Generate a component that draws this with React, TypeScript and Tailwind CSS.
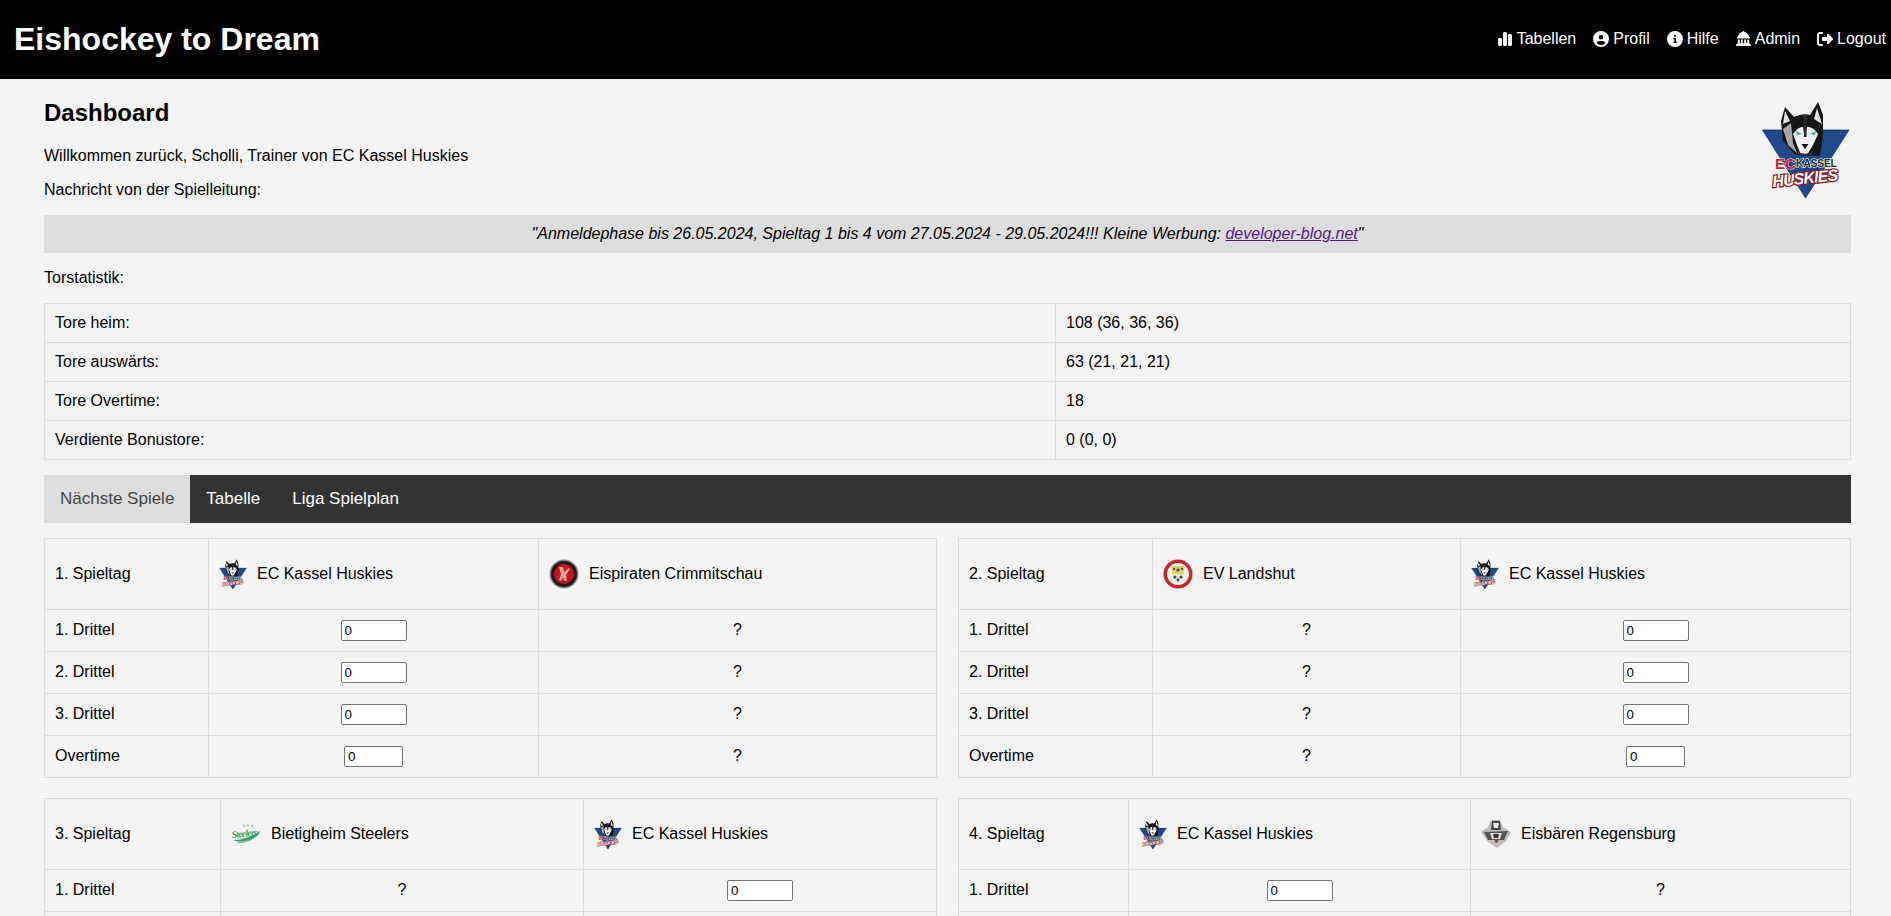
import { FaChartSimple, FaCircleInfo, FaCircleUser, FaLandmarkDome, FaRightFromBracket } from "react-icons/fa6";
import type { ReactNode } from "react";

const HuskyLogo = ({ className, viewBox = "0 0 100 100" }: { className: string; viewBox?: string }) => (
  <svg viewBox={viewBox} className={className}>
    <polygon points="7.5,31 94,31 50.5,99" fill="#1c4a8c" stroke="#123468" strokeWidth="0.8" />
    <path d="M30 8 L39 18 Q47 14 55 16 L63 3 L68 16 L68 38 L65 57 L40 56 L28 42 L26 22 Z" fill="#151515" />
    <path d="M30 12 L28 25 L35 22 Z M62 9 L67 25 L59 20 Z" fill="#e4e4e4" />
    <path d="M28 30 L36 24 L38 44 L42 54 L33 46 Z" fill="#a9a9a9" />
    <path d="M38 35 Q44 27 48 28 L50 38 L52 28 Q58 27 63 35 L58 46 L52 56 L46 56 L42 46 Z" fill="#f2f2f2" />
    <path d="M48 16 L52 16 L51.5 38 L49 38 Z" fill="#2a2a2a" />
    <path d="M41 32 L47 35 L42 36 Z M61 32 L55 35 L60 36 Z" fill="#38a3b5" />
    <path d="M46.5 45 L53.5 45 L50 50 Z" fill="#111" />
    <path d="M42 52 Q50 58 59 51 L57 56 L44 56 Z" fill="#333" />
    <text x="20" y="70" fontFamily="'Liberation Sans', sans-serif" fontWeight="700" fontSize="15" fill="#cf2530" stroke="#fff" strokeWidth="0.8" paintOrder="stroke">EC</text>
    <text x="41" y="68" fontFamily="'Liberation Sans', sans-serif" fontWeight="700" fontSize="10.5" fill="#2a2a2a" stroke="#fff" strokeWidth="1.2" paintOrder="stroke" textLength="41">KASSEL</text>
    <text x="18" y="88" fontFamily="'Liberation Sans', sans-serif" fontWeight="700" fontStyle="italic" fontSize="16" fill="#fff" stroke="#8f1c24" strokeWidth="2.6" paintOrder="stroke" textLength="66" transform="rotate(-6 18 88)">HUSKIES</text>
  </svg>
);

const CrimmitschauLogo = () => (
  <svg viewBox="0 0 30 30" className="w-[30px] h-[30px] shrink-0">
    <circle cx="15" cy="15" r="14.5" fill="#8a8a8a" />
    <circle cx="15" cy="15" r="13" fill="#1c1c1c" />
    <circle cx="15" cy="15" r="10" fill="#c8141c" />
    <path d="M10 8 L14 8 L15 13 L20 9 L21 10 L17 16 L18 22 L15 22 L14 18 L12 22 L10 21 L12 15 Z" fill="#d8a898" />
  </svg>
);

const LandshutLogo = () => (
  <svg viewBox="0 0 30 30" className="w-[30px] h-[30px] shrink-0">
    <circle cx="15" cy="15" r="14.5" fill="#cf2230" />
    <circle cx="15" cy="15" r="11" fill="#f6f4ea" />
    <path d="M9 7 H21 V15 H9 Z" fill="#dcd267" />
    <path d="M9 15 H21 Q21 22 15 24 Q9 22 9 15 Z" fill="#e6e6da" />
    <circle cx="15" cy="11" r="1.6" fill="#55603a" />
    <circle cx="11" cy="10" r="1.2" fill="#55603a" />
    <circle cx="19" cy="10" r="1.2" fill="#55603a" />
    <circle cx="12" cy="18" r="1.5" fill="#3a4a44" />
    <circle cx="18" cy="18" r="1.5" fill="#3a4a44" />
    <circle cx="15" cy="21" r="1.4" fill="#3a4a44" />
  </svg>
);

const SteelersLogo = () => (
  <svg viewBox="0 0 30 30" className="w-[30px] h-[30px] shrink-0">
    <circle cx="13" cy="7" r="0.8" fill="#37a566" />
    <circle cx="17" cy="6.5" r="0.8" fill="#37a566" />
    <circle cx="21" cy="7" r="0.8" fill="#37a566" />
    <text x="1" y="19" fontFamily="'Liberation Serif', serif" fontWeight="700" fontStyle="italic" fontSize="9.5" fill="#37a566" textLength="26" transform="rotate(-6 1 19)">Steelers</text>
    <path d="M2 21 Q15 21 29 12 Q27 20 14 22 Q8 24 2 21 Z" fill="#37a566" />
    <path d="M6 24 Q13 24 20 21" stroke="#6cbf8c" strokeWidth="1" fill="none" />
  </svg>
);

const RegensburgLogo = () => (
  <svg viewBox="0 0 30 30" className="w-[30px] h-[30px] shrink-0">
    <path d="M10 1 L19 1 L22 8 L30 13 L25 22 L16 29 L7 23 L0 13 L7 8 Z" fill="#bdbdbd" />
    <path d="M11 2 H19 L20 11 H10 Z" fill="#444" />
    <path d="M12 4 H18 L17 9 H13 Z" fill="#e6e6e6" />
    <path d="M3 13 L27 12 L23 21 H7 Z" fill="#555" />
    <path d="M9 14 L21 14 L19 20 H11 Z" fill="#d8d8d8" />
    <path d="M12 15 L18 15 L17 19 H13 Z" fill="#333" />
    <circle cx="15.5" cy="22" r="1.8" fill="#c23030" />
  </svg>
);

type TeamKey = "kassel" | "crimmitschau" | "landshut" | "steelers" | "regensburg";

const teams: Record<TeamKey, { name: string; logo: ReactNode }> = {
  kassel: {
    name: "EC Kassel Huskies",
    logo: <HuskyLogo className="w-[28px] h-[30px] shrink-0" viewBox="7 2 87.5 96" />,
  },
  crimmitschau: { name: "Eispiraten Crimmitschau", logo: <CrimmitschauLogo /> },
  landshut: { name: "EV Landshut", logo: <LandshutLogo /> },
  steelers: { name: "Bietigheim Steelers", logo: <SteelersLogo /> },
  regensburg: { name: "Eisbären Regensburg", logo: <RegensburgLogo /> },
};

const stats = [
  ["Tore heim:", "108 (36, 36, 36)"],
  ["Tore auswärts:", "63 (21, 21, 21)"],
  ["Tore Overtime:", "18"],
  ["Verdiente Bonustore:", "0 (0, 0)"],
];

const cell = "border border-[#ddd] px-[10px] align-middle";

const Score = ({ mine, wide }: { mine: boolean; wide: boolean }) =>
  mine ? (
    <input
      type="text"
      defaultValue="0"
      className={`${wide ? "w-[66px]" : "w-[59px]"} h-[21px] mx-auto block bg-white border border-[#767676] rounded-[2px] px-[3px] text-[13.33px] text-black outline-none`}
    />
  ) : (
    <span className="block pb-[2px]">?</span>
  );

const GameTable = ({
  day,
  home,
  away,
  cols,
}: {
  day: string;
  home: TeamKey;
  away: TeamKey;
  cols: [string, string, string];
}) => {
  const homeMine = home === "kassel";
  const awayMine = away === "kassel";
  return (
    <table className="w-full table-fixed border-collapse">
      <tbody>
        <tr className="h-[71px]">
          <td className={`${cell} ${cols[0]}`}>{day}</td>
          <td className={`${cell} ${cols[1]}`}>
            <div className="flex items-center gap-[10px]">
              {teams[home].logo}
              <span>{teams[home].name}</span>
            </div>
          </td>
          <td className={`${cell} ${cols[2]}`}>
            <div className="flex items-center gap-[10px]">
              {teams[away].logo}
              <span>{teams[away].name}</span>
            </div>
          </td>
        </tr>
        {["1. Drittel", "2. Drittel", "3. Drittel", "Overtime"].map((label) => (
          <tr key={label} className="h-[42px]">
            <td className={cell}>
              <span className="block pb-[2px]">{label}</span>
            </td>
            <td className={`${cell} text-center`}>
              <Score mine={homeMine} wide={label !== "Overtime"} />
            </td>
            <td className={`${cell} text-center`}>
              <Score mine={awayMine} wide={label !== "Overtime"} />
            </td>
          </tr>
        ))}
      </tbody>
    </table>
  );
};

const NavItem = ({ icon, label }: { icon: ReactNode; label: string }) => (
  <a className="flex items-center gap-[4px] text-white">
    {icon}
    {label}
  </a>
);

export default function App() {
  return (
    <div className="min-h-screen bg-[#f4f4f4] text-[16px] leading-[24px] text-black font-['Liberation_Sans',Arial,sans-serif]">
      <header className="h-[79px] bg-black flex items-center justify-between pl-[14px] pr-[5px] pb-[2px]">
        <div className="text-[32px] font-bold text-white leading-none">Eishockey to Dream</div>
        <nav className="flex items-center gap-[17px]">
          <NavItem icon={<FaChartSimple className="w-[16px] h-[16px]" />} label="Tabellen" />
          <NavItem icon={<FaCircleUser className="w-[16px] h-[16px]" />} label="Profil" />
          <NavItem icon={<FaCircleInfo className="w-[16px] h-[16px]" />} label="Hilfe" />
          <NavItem icon={<FaLandmarkDome className="w-[15px] h-[15px]" />} label="Admin" />
          <NavItem icon={<FaRightFromBracket className="w-[16px] h-[16px]" />} label="Logout" />
        </nav>
      </header>

      <main className="pl-[44px] pr-[40px] pt-[20px] pb-[20px]">
        <HuskyLogo className="float-right w-[100px] h-[100px] mr-[-4px]" />
        <h1 className="text-[24px] font-bold leading-[28px] mb-[17px]">Dashboard</h1>
        <p className="mb-[10px]">Willkommen zurück, Scholli, Trainer von EC Kassel Huskies</p>
        <p className="mb-[13px]">Nachricht von der Spielleitung:</p>
        <div className="clear-both bg-[#ddd] h-[38px] flex items-center justify-center italic">
          <span>
            "Anmeldephase bis 26.05.2024, Spieltag 1 bis 4 vom 27.05.2024 - 29.05.2024!!! Kleine Werbung:{" "}
            <a className="text-[#551a8b] underline">developer-blog.net</a>"
          </span>
        </div>
        <p className="mt-[13px] mb-[13px]">Torstatistik:</p>

        <table className="w-full border-collapse">
          <tbody>
            {stats.map(([label, value]) => (
              <tr key={label} className="h-[39px]">
                <td className={`${cell} w-[1011px]`}>{label}</td>
                <td className={cell}>{value}</td>
              </tr>
            ))}
          </tbody>
        </table>

        <div className="mt-[15px] mb-[15px] h-[48px] bg-[#333] flex text-[17px] text-white">
          <button className="px-[16px] bg-[#ddd] text-[#444]">Nächste Spiele</button>
          <button className="px-[16px]">Tabelle</button>
          <button className="px-[16px]">Liga Spielplan</button>
        </div>

        <div className="grid grid-cols-2 gap-x-[21px] gap-y-[20px]">
          <GameTable day="1. Spieltag" home="kassel" away="crimmitschau" cols={["w-[164px]", "w-[330px]", "w-auto"]} />
          <GameTable day="2. Spieltag" home="landshut" away="kassel" cols={["w-[194px]", "w-[308px]", "w-auto"]} />
          <GameTable day="3. Spieltag" home="steelers" away="kassel" cols={["w-[176px]", "w-[363px]", "w-auto"]} />
          <GameTable day="4. Spieltag" home="kassel" away="regensburg" cols={["w-[170px]", "w-[342px]", "w-auto"]} />
        </div>
      </main>
    </div>
  );
}
